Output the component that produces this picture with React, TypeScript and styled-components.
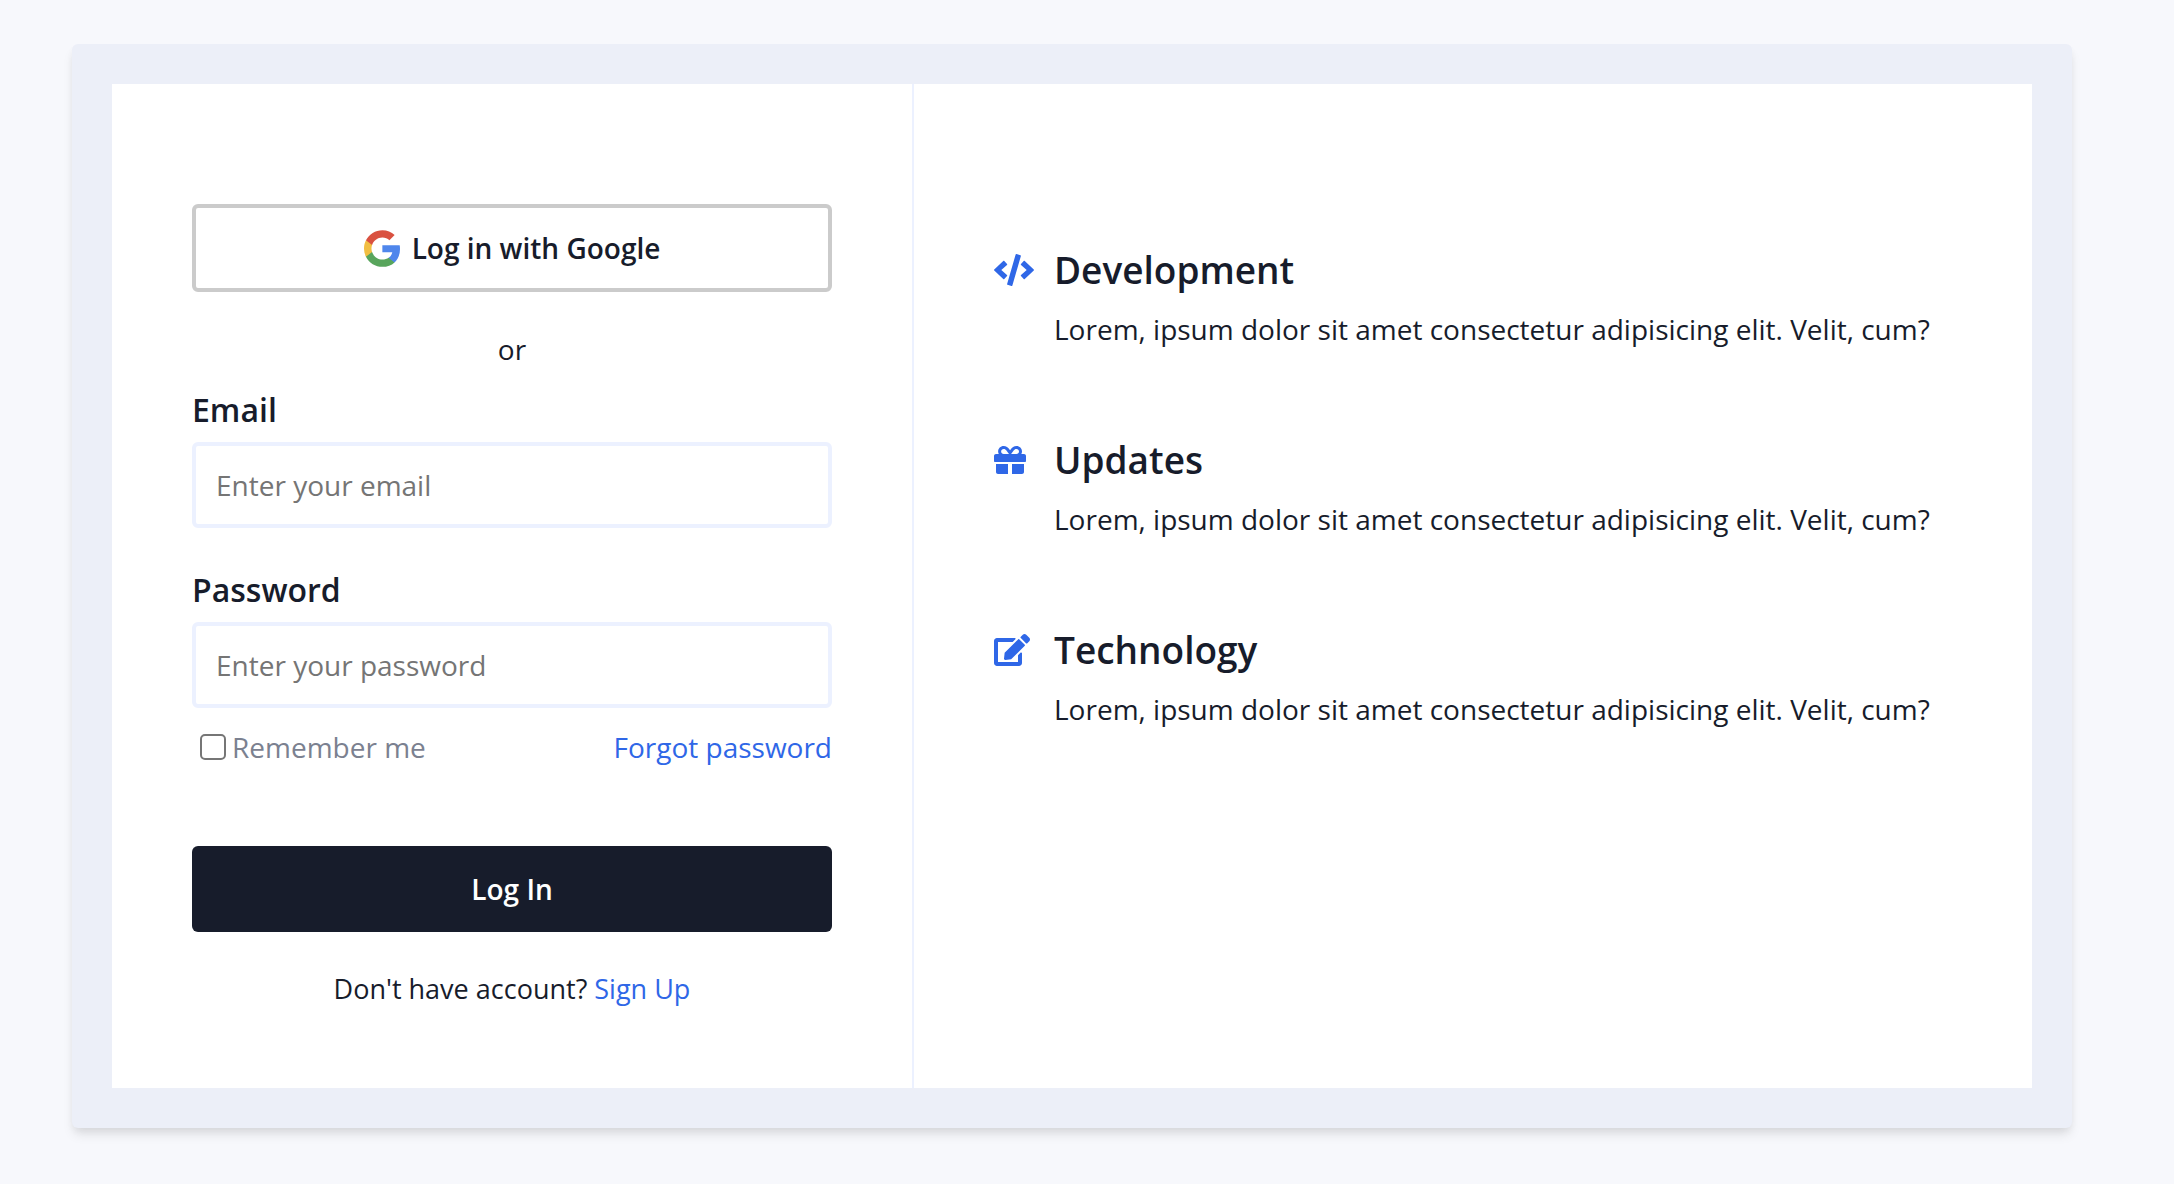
import React from "react";
import styled, { createGlobalStyle } from "styled-components";
import { FaCode, FaEdit, FaGift } from "react-icons/fa";

const GlobalStyle = createGlobalStyle`
  *, *::before, *::after { box-sizing: border-box; }
  body {
    margin: 0;
    background: #f7f8fc;
    color: #171c2b;
    font-family: "Open Sans", "Noto Sans", sans-serif;
    font-size: 28px;
    line-height: 42px;
  }
  h2, p { margin: 0; }
`;

const Page = styled.main`
  padding: 44px 102px 56px 72px;
`;

const Card = styled.section`
  padding: 40px;
  background: #eceff8;
  border-radius: 6px;
  box-shadow: 0 8px 12px -2px rgba(0, 0, 0, 0.1), 0 4px 8px -2px rgba(0, 0, 0, 0.06);
`;

const Columns = styled.div`
  display: grid;
  grid-template-columns: 5fr 7fr;
  background: #ffffff;
`;

const LoginForm = styled.form`
  display: flex;
  flex-direction: column;
  padding: 120px 80px 78px;
`;

const Features = styled.ul`
  display: flex;
  flex-direction: column;
  gap: 80px;
  margin: 0;
  padding: 156px 80px 80px;
  border-left: 2px solid #ecf1ff;
  list-style: none;
`;

const Button = styled.button`
  display: flex;
  align-items: center;
  justify-content: center;
  gap: 12px;
  width: 100%;
  border-radius: 6px;
  font: inherit;
  font-weight: 600;
  cursor: pointer;
`;

const GoogleButton = styled(Button)`
  padding: 19px 20px;
  border: 4px solid #cbcbcb;
  background: #ffffff;
  color: #171c2b;
`;

const SubmitButton = styled(Button)`
  margin-top: 78px;
  padding: 22px 20px;
  border: 0;
  background: #171c2b;
  color: #ffffff;
`;

const Divider = styled.p`
  margin: 36px 0 16px;
  text-align: center;
`;

const Field = styled.div`
  display: flex;
  flex-direction: column;
  gap: 8px;

  & + & {
    margin-top: 38px;
  }
`;

const Label = styled.label`
  font-size: 32px;
  line-height: 48px;
  font-weight: 600;
`;

const Input = styled.input`
  width: 100%;
  padding: 18px 20px;
  border: 4px solid #ecf1ff;
  border-radius: 6px;
  background: #ffffff;
  color: inherit;
  font: inherit;
  line-height: 42px;

  &::placeholder {
    color: #757575;
    opacity: 1;
  }
`;

const Options = styled.div`
  display: flex;
  align-items: center;
  justify-content: space-between;
  margin-top: 18px;
`;

const Remember = styled.label`
  display: flex;
  align-items: center;
  gap: 6px;
  padding-left: 8px;
  color: #7b8190;
`;

const Checkbox = styled.input`
  appearance: none;
  width: 26px;
  height: 26px;
  margin: 0;
  border: 2px solid #767676;
  border-radius: 5px;
  background: #ffffff;

  &:checked {
    background: #2f67e7;
  }
`;

const Link = styled.a`
  color: #2f67e7;
  text-decoration: none;
`;

const SignUp = styled.p`
  margin-top: 36px;
  font-size: 27px;
  text-align: center;
`;

const Feature = styled.li`
  display: grid;
  grid-template-columns: 60px 1fr;
  row-gap: 8px;
  align-items: center;
`;

const FeatureIcon = styled.span<{ $width: number }>`
  display: flex;
  color: #2f67e7;

  svg {
    width: ${({ $width }) => $width}px;
    height: 32px;
  }
`;

const FeatureTitle = styled.h2`
  font-size: 37px;
  line-height: 60px;
  font-weight: 600;
`;

const FeatureText = styled.p`
  grid-column: 2;
`;

const GoogleMark = () => (
  <svg width="36" height="37" viewBox="0 0 533.5 544.3" aria-hidden="true">
    <path fill="#4f86ec" d="M533.5 278.4c0-18.5-1.5-37.1-4.7-55.3H272.1v104.8h147c-6.1 33.8-25.7 63.7-54.4 82.7v68h87.7c51.5-47.4 81.1-117.4 81.1-200.2z" />
    <path fill="#58a55c" d="M272.1 544.3c73.4 0 135.3-24.1 180.4-65.7l-87.7-68c-24.4 16.6-55.9 26-92.6 26-71 0-131.2-47.9-152.8-112.3H28.9v70.1c46.2 91.9 140.3 149.9 243.2 149.9z" />
    <path fill="#f1be42" d="M119.3 324.3c-11.4-33.8-11.4-70.4 0-104.2V150H28.9c-38.6 76.9-38.6 167.5 0 244.4l90.4-70.1z" />
    <path fill="#d95140" d="M272.1 107.7c38.8-.6 76.3 14 104.4 40.8l77.7-77.7C405 24.6 339.7-.8 272.1 0 169.2 0 75.1 58 28.9 150l90.4 70.1c21.5-64.5 81.8-112.4 152.8-112.4z" />
  </svg>
);

const features = [
  { title: "Development", Icon: FaCode, iconWidth: 40 },
  { title: "Updates", Icon: FaGift, iconWidth: 32 },
  { title: "Technology", Icon: FaEdit, iconWidth: 36 },
];

export default function App() {
  return (
    <>
      <GlobalStyle />
      <Page>
        <Card>
          <Columns>
            <LoginForm onSubmit={(event) => event.preventDefault()}>
              <GoogleButton type="button">
                <GoogleMark />
                Log in with Google
              </GoogleButton>
              <Divider>or</Divider>
              <Field>
                <Label htmlFor="email">Email</Label>
                <Input id="email" type="email" placeholder="Enter your email" />
              </Field>
              <Field>
                <Label htmlFor="password">Password</Label>
                <Input id="password" type="password" placeholder="Enter your password" />
              </Field>
              <Options>
                <Remember htmlFor="remember">
                  <Checkbox id="remember" type="checkbox" />
                  Remember me
                </Remember>
                <Link href="#forgot">Forgot password</Link>
              </Options>
              <SubmitButton type="submit">Log In</SubmitButton>
              <SignUp>
                Don't have account? <Link href="#signup">Sign Up</Link>
              </SignUp>
            </LoginForm>
            <Features>
              {features.map(({ title, Icon, iconWidth }) => (
                <Feature key={title}>
                  <FeatureIcon $width={iconWidth}>
                    <Icon aria-hidden="true" />
                  </FeatureIcon>
                  <FeatureTitle>{title}</FeatureTitle>
                  <FeatureText>
                    Lorem, ipsum dolor sit amet consectetur adipisicing elit. Velit, cum?
                  </FeatureText>
                </Feature>
              ))}
            </Features>
          </Columns>
        </Card>
      </Page>
    </>
  );
}
